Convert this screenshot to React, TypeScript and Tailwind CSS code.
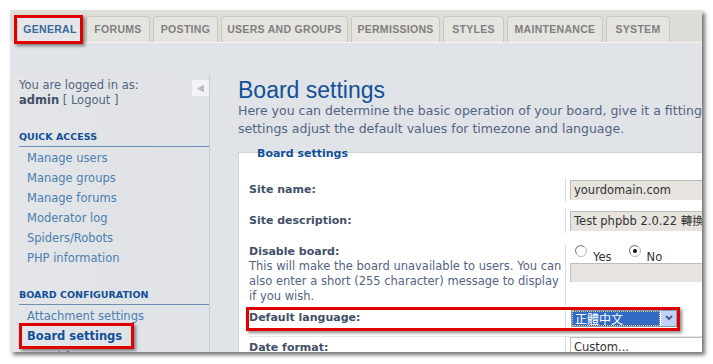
import React from "react";

const tabs = [
  { label: "GENERAL", w: "w-[66px]", active: true },
  { label: "FORUMS", w: "w-[64px]" },
  { label: "POSTING", w: "w-[65px]" },
  { label: "USERS AND GROUPS", w: "w-[127px]" },
  { label: "PERMISSIONS", w: "w-[89px]" },
  { label: "STYLES", w: "w-[61px]" },
  { label: "MAINTENANCE", w: "w-[96px]" },
  { label: "SYSTEM", w: "w-[64px]" },
];

const quickAccess = [
  "Manage users",
  "Manage groups",
  "Manage forums",
  "Moderator log",
  "Spiders/Robots",
  "PHP information",
];

const redBox = "border-[3px] border-[#e00000] shadow-[2px_2px_3px_rgba(0,0,0,0.45)]";

function Radio({ checked }: { checked?: boolean }) {
  return (
    <svg width="12" height="12" viewBox="0 0 12 12" className="inline-block shrink-0">
      <circle cx="6" cy="6" r="5.5" fill="#fff" stroke="#b8b8b8" />
      <path d="M1.5 8.5 A5 5 0 0 1 8.5 1.5" stroke="#808080" fill="none" />
      {checked && <circle cx="6" cy="6" r="2" fill="#111" />}
    </svg>
  );
}

export default function App() {
  return (
    <div className="w-[713px] h-[364px] bg-white overflow-hidden font-['DejaVu_Sans',Verdana,sans-serif]">
      <div className="ml-[10px] mt-[10px] w-[692px] h-[342px] shadow-[3px_3px_4px_rgba(0,0,0,0.55)] bg-[#e0e3e7] flex flex-col overflow-hidden">
        {/* Tabs */}
        <div className="h-[33px] bg-[#dfddd8] flex items-end pl-[7px] gap-[3px] border-b border-[#f4f4f4] shrink-0">
          {tabs.map((t) => (
            <div
              key={t.label}
              className={`${t.w} h-[26px] rounded-t-[4px] border border-b-0 border-[#cac8c3] flex items-center justify-center pt-[1px] text-[10.5px] font-bold tracking-[0.3px] font-['Liberation_Sans',Arial,sans-serif] ${
                t.active ? "bg-[#e4e6ea] text-[#3b6a99] relative" : "bg-[#e6e4df] text-[#808080]"
              }`}
            >
              {t.label}
              {t.active && <div className={`absolute -left-[4px] -top-[2px] w-[69px] h-[29px] ${redBox}`} />}
            </div>
          ))}
        </div>

        {/* Body */}
        <div className="flex flex-1 pt-[32px] min-h-0">
          {/* Sidebar */}
          <div className="w-[200px] shrink-0 border-r border-[#c8cbd0] pl-[9px] pt-[3px] bg-gradient-to-r from-[#e3e5e8] to-[#dfe2e6]">
            <div className="flex justify-between">
              <div className="text-[11.5px] leading-[15px] text-[#536482]">
                <div>You are logged in as:</div>
                <div>
                  <b className="text-[#425067]">admin</b> [ Logout ]
                </div>
              </div>
              <div className="w-[17px] h-[16px] mt-[2px] bg-[#f2f3f5] flex items-center justify-center">
                <svg width="9" height="9" viewBox="0 0 9 9">
                  <path d="M8 0.5 L1 4.5 L8 8.5 Z" fill="#b9bcc2" />
                </svg>
              </div>
            </div>

            <div className="mt-[22px] text-[9.5px] font-bold text-[#115098] border-b border-[#6d8fb5] pb-[2px] leading-[14px]">
              QUICK ACCESS
            </div>
            <ul className="pl-[8px] text-[11.5px] text-[#4b80b1] leading-[20px] pt-[1px]">
              {quickAccess.map((q) => (
                <li key={q}>{q}</li>
              ))}
            </ul>

            <div className="mt-[20px] text-[9.5px] font-bold text-[#115098] border-b border-[#6d8fb5] pb-[2px] leading-[14px]">
              BOARD CONFIGURATION
            </div>
            <ul className="pl-[8px] text-[11.5px] text-[#4b80b1] leading-[20px] pt-[1px]">
              <li>Attachment settings</li>
              <li className="relative font-bold text-[#115098] leading-[21px]">
                Board settings
                <div className={`absolute -left-[8px] top-[-3px] w-[115px] h-[26px] ${redBox}`} />
              </li>
              <li>Board features</li>
            </ul>
          </div>

          {/* Main */}
          <div className="flex-1 pl-[28px] min-w-0">
            <h1 className="text-[23px] leading-[26px] mt-[2px] text-[#115098] font-['Liberation_Sans',Arial,sans-serif] whitespace-nowrap">
              Board settings
            </h1>
            <p className="text-[12.5px] leading-[18px] -mt-[1px] text-[#536482] whitespace-nowrap">
              Here you can determine the basic operation of your board, give it a fitting name and description, and among other
              <br />
              settings adjust the default values for timezone and language.
            </p>

            <div className="mt-[14px] bg-white border-t border-l border-[#cfd3d8] relative pt-[25px] pl-[10px]">
              <div className="absolute left-[18px] -top-[7px] text-[11px] font-bold text-[#115098] leading-[16px]">
                Board settings
              </div>

              {/* Site name */}
              <div className="flex h-[24px] items-center">
                <div className="w-[317px] shrink-0 h-full flex items-center border-r border-[#dcdcdc] text-[11px] font-bold text-[#425067]">
                  Site name:
                </div>
                <div className="ml-[4px] h-[20px] flex-1 bg-[#e7e4df] border-t border-l border-[#bcbcbc] text-[11.5px] text-[#333] pl-[3px] leading-[18px] whitespace-nowrap">
                  yourdomain.com
                </div>
              </div>

              {/* Site description */}
              <div className="flex h-[24px] items-center mt-[7px]">
                <div className="w-[317px] shrink-0 h-full flex items-center border-r border-[#dcdcdc] text-[11px] font-bold text-[#425067]">
                  Site description:
                </div>
                <div className="ml-[4px] h-[20px] flex-1 bg-[#e7e4df] border-t border-l border-[#bcbcbc] text-[11.5px] text-[#333] pl-[3px] leading-[18px] whitespace-nowrap overflow-hidden font-['DejaVu_Sans','Noto_Sans_CJK_TC',sans-serif]">
                  Test phpbb 2.0.22 轉換
                </div>
              </div>

              {/* Disable board */}
              <div className="flex mt-[12px]">
                <div className="w-[317px] shrink-0 border-r border-[#dcdcdc] pb-[1px]">
                  <div className="text-[11px] font-bold text-[#425067] leading-[14px]">Disable board:</div>
                  <div className="text-[11.5px] text-[#536482] leading-[15px] pr-[2px]">
                    This will make the board unavailable to users. You can
                    <br />
                    also enter a short (255 character) message to display
                    <br />
                    if you wish.
                  </div>
                </div>
                <div className="ml-[4px] flex-1 min-w-0">
                  <div className="flex text-[11.5px] text-[#333] h-[18px] pl-[5px]">
                    <Radio />
                    <span className="mt-[4px] ml-[6px] mr-[17px]">Yes</span>
                    <Radio checked />
                    <span className="mt-[4px] ml-[6px]">No</span>
                  </div>
                  <div className="h-[19px] bg-[#e7e4df] border-t border-l border-[#bcbcbc]" />
                </div>
              </div>

              {/* Default language */}
              <div className="flex h-[20px] items-center mt-[3px] relative">
                <div className="w-[317px] shrink-0 h-full flex items-center border-r border-[#dcdcdc] text-[11px] font-bold text-[#425067]">
                  Default language:
                </div>
                <div className="ml-[5px] h-[17px] w-[106px] border border-[#7f9db9] bg-white flex font-['Noto_Sans_CJK_TC',sans-serif]">
                  <div className="flex-1 bg-[#316ac5] text-white text-[12px] leading-[14px] pl-[2px] border border-dotted border-[#f6c46b]">
                    正體中文
                  </div>
                  <div className="w-[16px] bg-[#c1d3fb] border-l border-white flex items-center justify-center">
                    <svg width="8" height="6" viewBox="0 0 8 6">
                      <path d="M1 1 L4 4 L7 1" stroke="#4d6185" strokeWidth="2" fill="none" />
                    </svg>
                  </div>
                </div>
                <div className={`absolute left-[-3px] top-[-1px] w-[434px] h-[24px] ${redBox}`} />
              </div>

              {/* Date format */}
              <div className="flex h-[20px] items-center mt-[8px] border-t border-[#e6e6e6]">
                <div className="w-[317px] shrink-0 h-full border-r border-[#dcdcdc] text-[11px] font-bold text-[#425067] pt-[3px]">
                  Date format:
                </div>
                <div className="ml-[4px] h-[20px] flex-1 bg-white border-t border-l border-[#bcbcbc] text-[11.5px] text-[#333] pl-[3px] leading-[18px]">
                  Custom...
                </div>
              </div>
            </div>
          </div>
        </div>
      </div>
    </div>
  );
}
